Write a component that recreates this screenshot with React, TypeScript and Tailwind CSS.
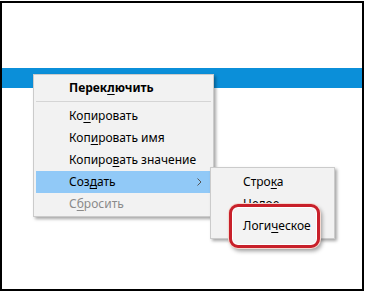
import React from "react";

const U = ({ children }: { children: React.ReactNode }) => (
  <span className="underline underline-offset-[2px] decoration-[1px]">{children}</span>
);

export default function App() {
  return (
    <div
      className="relative w-[365px] h-[292px] bg-white overflow-hidden pt-px"
      style={{ fontFamily: '"Noto Sans", "Open Sans", sans-serif' }}
    >
      <div className="box-border w-[364px] h-[290px] border-2 border-black">
        <div className="h-[65px]" />
        <div className="h-[20px] bg-[#0b8fd9]" />
      </div>

      {/* context menu */}
      <div className="absolute left-[33px] top-[74px] w-[181px] border border-[#cbcbcb] bg-[#f2f2f2] pt-[2px] pb-px shadow-[2px_2px_3px_rgba(0,0,0,0.35)] text-[12px] text-black">
        <div className="h-[22px] flex items-center pl-[35px] font-bold">
          <span>
            Перек<U>л</U>ючить
          </span>
        </div>
        <div className="mt-[2px] mb-[3px] mx-[2px] h-px bg-[#d5d5d5]" />
        <div className="h-[22px] flex items-center pl-[35px]">
          <span>
            Ко<U>п</U>ировать
          </span>
        </div>
        <div className="h-[22px] flex items-center pl-[35px]">
          <span>
            Коп<U>и</U>ровать имя
          </span>
        </div>
        <div className="h-[22px] flex items-center pl-[35px]">
          <span>
            Копиро<U>в</U>ать значение
          </span>
        </div>
        <div className="h-[22px] mx-[2px] flex items-center pl-[33px] pr-[9px] bg-[#91c9f7] justify-between">
          <span>
            Соз<U>д</U>ать
          </span>
          <svg width="5" height="8" viewBox="0 0 5 8">
            <path d="M0.5 0.5 L4 4 L0.5 7.5" fill="none" stroke="#555" strokeWidth="1" />
          </svg>
        </div>
        <div className="h-[22px] flex items-center pl-[35px] text-[#8a8a8a]">
          <span>
            С<U>б</U>росить
          </span>
        </div>
      </div>

      {/* submenu */}
      <div className="absolute left-[210px] top-[167px] w-[125px] border border-[#cbcbcb] bg-[#f2f2f2] pt-[3px] pb-px shadow-[2px_2px_3px_rgba(0,0,0,0.35)] text-[12px] text-black">
        <div className="h-[22px] flex items-center pl-[32px]">
          <span>
            Стро<U>к</U>а
          </span>
        </div>
        <div className="h-[22px] flex items-center pl-[32px]">
          <span>
            Ц<U>е</U>лое
          </span>
        </div>
        <div className="relative z-10 h-[22px] flex items-center pl-[32px]">
          <span>
            Логи<U>ч</U>еское
          </span>
        </div>
        <div className="absolute left-[18px] top-[36px] w-[91px] h-[44px] rounded-[9px] border-[3px] border-[#c8202a] bg-[#f3f3f3] shadow-[0_0_0_1px_#f4d8cf,inset_0_0_0_1px_#ffffff,2px_3px_4px_rgba(0,0,0,0.4)]" />
      </div>
    </div>
  );
}
